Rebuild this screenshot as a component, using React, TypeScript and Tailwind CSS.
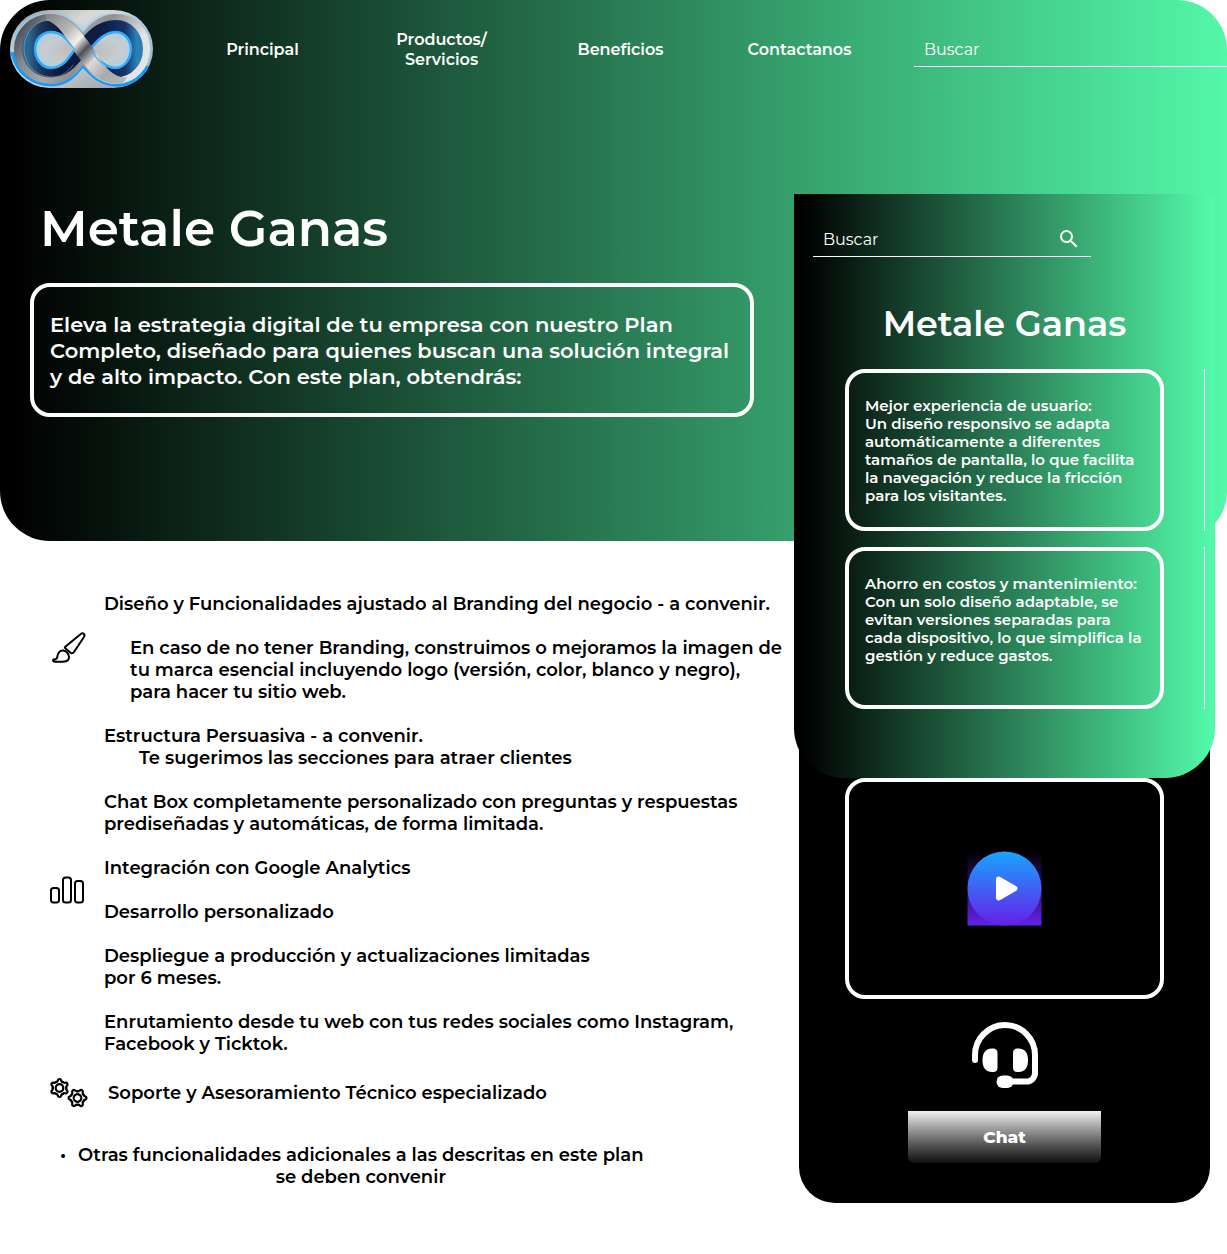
import React from "react";

const navLinks = ["Principal", "Productos/ Servicios", "Beneficios", "Contactanos"];

function Logo() {
  const holes =
    "M65 39C56 28 51 22 41 22C31 22 25 30 25 39C25 48 31 58 41 58C53 58 59 48 65 39ZM80 39C87 31 94 22 106 22C115 22 121 30 121 39C121 48 115 58 106 58C94 58 87 48 80 39Z";
  const loop =
    "M73 39C63 27 56 14 41 14C26 14 14 25 14 39C14 53 26 64 41 64C56 64 63 52 73 39C83 26 91 14 106 14C120 14 130 25 130 39C130 53 120 64 106 64C91 64 83 52 73 39Z";
  return (
    <svg viewBox="0 0 143 78" className="h-[78px] w-[143px] shrink-0 rounded-full" role="img" aria-label="Metale Ganas">
      <defs>
        <linearGradient id="plate" x1="0" y1="0" x2="1" y2="1">
          <stop offset="0" stopColor="#8d9192" />
          <stop offset="0.3" stopColor="#d9dad7" />
          <stop offset="0.6" stopColor="#c3c6c7" />
          <stop offset="1" stopColor="#8b949c" />
        </linearGradient>
        <linearGradient id="silver" x1="0" y1="0" x2="1" y2="0.3">
          <stop offset="0" stopColor="#4e5359" />
          <stop offset="0.2" stopColor="#85898e" />
          <stop offset="0.45" stopColor="#a9a7a6" />
          <stop offset="0.65" stopColor="#8e8f91" />
          <stop offset="0.85" stopColor="#bdbcbb" />
          <stop offset="1" stopColor="#e4e4e2" />
        </linearGradient>
        <linearGradient id="navy" x1="0" y1="0" x2="1" y2="0">
          <stop offset="0" stopColor="#2d6690" />
          <stop offset="0.12" stopColor="#1a3357" />
          <stop offset="0.3" stopColor="#0d1738" />
          <stop offset="0.7" stopColor="#0f1d47" />
          <stop offset="0.9" stopColor="#17346c" />
          <stop offset="1" stopColor="#2a7fb4" />
        </linearGradient>
        <linearGradient id="band" gradientUnits="userSpaceOnUse" x1="38" y1="6" x2="108" y2="72">
          <stop offset="0" stopColor="#85888c" />
          <stop offset="0.25" stopColor="#b9b8b6" />
          <stop offset="0.4" stopColor="#f4f1ec" />
          <stop offset="0.52" stopColor="#4d4f55" />
          <stop offset="0.66" stopColor="#dddad6" />
          <stop offset="0.85" stopColor="#a8a9ab" />
          <stop offset="1" stopColor="#b4b4b4" />
        </linearGradient>
        <radialGradient id="hole">
          <stop offset="0" stopColor="#b4b8bb" />
          <stop offset="0.8" stopColor="#c9ccce" />
          <stop offset="1" stopColor="#b5cedb" />
        </radialGradient>
        <filter id="glow" x="-20%" y="-20%" width="140%" height="140%">
          <feGaussianBlur stdDeviation="1.6" />
        </filter>
        <filter id="soft" x="-20%" y="-20%" width="140%" height="140%">
          <feGaussianBlur stdDeviation="0.7" />
        </filter>
      </defs>
      <rect width="143" height="78" fill="url(#plate)" />
      <path d={loop} fill="none" stroke="#8fcdf0" strokeWidth="23" filter="url(#glow)" />
      <path d="M3 42C7 63 24 74 41 74C59 74 66 62 73 54C81 64 90 74 108 74C122 74 132 67 137 56" fill="none" stroke="#0d9bff" strokeWidth="5" filter="url(#soft)" />
      <path d={loop} fill="none" stroke="url(#silver)" strokeWidth="20" />
      <path
        d="M72 39C61 27 55 16.500 41 16.500C28 16.500 18.500 27 18.500 39C18.500 51 28 61 41 61C55 61 62 51 72 39C81 27 90 16.500 106 16.500C118 16.500 126.500 27 126.500 39C126.500 51 118 61 106 61C91 61 81 51 72 39Z"
        fill="none"
        stroke="url(#navy)"
        strokeWidth="13"
      />
      <path d={holes} fill="url(#hole)" stroke="#149eff" strokeWidth="2.500" filter="url(#soft)" />
      <path d={holes} fill="none" stroke="#4fc0fb" strokeWidth="0.800" />
      <path d="M36 4C56 3 67 17 78 31C88 44 94 60 108 66Q112 68 117 67Q114 74 108 74C90 74 80 62 69 48C60 36 52 15 36 10Z" fill="url(#band)" />
      <path d="M65 40C57 30 52 22 42 22M81 40C87 49 93 58 106 58" fill="none" stroke="#35b4ff" strokeWidth="1.300" />
      <path d="M41 10C25 10 14 23 14 39C14 54 26 67 42 67C51 67 58 62 63 55" fill="none" stroke="#b4bfc6" strokeWidth="0.500" />
    </svg>
  );
}

function SearchIcon() {
  return (
    <svg viewBox="0 0 24 24" className="size-6" fill="#fff" aria-hidden="true">
      <path d="M15.5 14h-.79l-.28-.27A6.47 6.47 0 0 0 16 9.5 6.5 6.5 0 1 0 9.5 16c1.61 0 3.09-.59 4.23-1.57l.27.28v.79l5 4.99L20.49 19l-4.99-5zm-6 0C7.01 14 5 11.99 5 9.5S7.01 5 9.5 5 14 7.01 14 9.5 11.99 14 9.5 14z" />
    </svg>
  );
}

function BrushIcon() {
  return (
    <svg viewBox="0 0 38 34" className="h-[34px] w-[38px]" fill="none" stroke="#000" strokeWidth="2" strokeLinejoin="round" strokeLinecap="round" aria-hidden="true">
      <path d="M15 16L30.500 3.200C33 1.200 35.500 3 34 6L24 21C22.800 22.800 21 22.500 20 21.300L15.300 17.200Q14.500 16.500 15 16Z" />
      <path d="M13.300 19.500C10 19 7.500 22 7.300 26C7.200 28.300 5 28.500 3.500 28.600C2.500 29 3 30.800 5.500 30.800H13C18 30.800 19.800 28 18.800 24.800C18 22 16 20 13.300 19.500Z" />
    </svg>
  );
}

function ChartIcon() {
  return (
    <svg viewBox="0 0 38 30" className="h-[30px] w-[38px]" fill="none" stroke="#000" strokeWidth="2" aria-hidden="true">
      <rect x="1" y="13" width="8" height="14.500" rx="2.500" />
      <rect x="13" y="2.500" width="8" height="25" rx="2.500" />
      <rect x="25" y="6" width="8" height="21.500" rx="2.500" />
    </svg>
  );
}

function Gear() {
  return (
    <>
      {[0, 60, 120, 180, 240, 300].map((angle) => (
        <path key={angle} d="M-3.400 -5.900Q-2 -6.200 -1.700 -7.600Q-1.400 -9 0 -9Q1.400 -9 1.700 -7.600Q2 -6.200 3.400 -5.900" transform={`rotate(${angle})`} />
      ))}
      <circle r="3.800" />
    </>
  );
}

function GearsIcon() {
  return (
    <svg viewBox="0 0 38 32" className="h-8 w-[38px]" fill="none" stroke="#000" strokeWidth="2.200" strokeLinejoin="round" strokeLinecap="round" aria-hidden="true">
      <g transform="translate(9.500 11)">
        <Gear />
      </g>
      <g transform="translate(27.500 21) rotate(30)">
        <Gear />
      </g>
    </svg>
  );
}

function PlayIcon() {
  return (
    <svg viewBox="0 0 75 75" className="size-[75px]" aria-hidden="true">
      <defs>
        <linearGradient id="play" x1="0" y1="0" x2="0" y2="1">
          <stop offset="0" stopColor="#1aa4ff" />
          <stop offset="1" stopColor="#651fe8" />
        </linearGradient>
        <linearGradient id="shade" x1="0" y1="0" x2="0" y2="1">
          <stop offset="0" stopColor="#651fe8" stopOpacity="0" />
          <stop offset="1" stopColor="#651fe8" />
        </linearGradient>
      </defs>
      <rect x="0.500" width="74" height="74.500" fill="url(#shade)" />
      <circle cx="37.500" cy="37.500" r="37" fill="url(#play)" />
      <path d="M31.500 28L48 37.500L31.500 47Z" fill="#fff" stroke="#fff" strokeWidth="5" strokeLinejoin="round" />
    </svg>
  );
}

function HeadsetIcon() {
  return (
    <svg viewBox="0 0 66 66" className="size-[66px]" fill="#fff" aria-hidden="true">
      <path d="M3 38V33A30 30 0 0 1 63 33V51A8.500 8.500 0 0 1 54.500 59.500H36" fill="none" stroke="#fff" strokeWidth="6" strokeLinecap="round" />
      <path d="M20 26.500H21Q25.500 26.500 25.500 31V45.500Q25.500 50 21 50H20C13 50 10.500 45 10.500 38.300S13 26.500 20 26.500Z" />
      <path d="M46.500 26.500H45.500Q41 26.500 41 31V45.500Q41 50 45.500 50H46.500C53.500 50 56 45 56 38.300S53.500 26.500 46.500 26.500Z" />
      <rect x="24.500" y="53.500" width="17" height="12.500" rx="6.200" />
    </svg>
  );
}

function Benefit({ title, lines }: { title: string; lines: string[] }) {
  return (
    <div className="flex gap-10">
      <article className="h-[162px] w-[319px] rounded-[20px] border-4 border-white px-4 pt-6 text-[15px] leading-[18px] font-semibold">
        <h3 className="whitespace-nowrap">{title}</h3>
        <p>
          {lines.map((line) => (
            <span key={line} className="block whitespace-nowrap">{line}</span>
          ))}
        </p>
      </article>
      <div className="w-px bg-white" />
    </div>
  );
}

export default function App() {
  return (
    <div className="grid min-h-[1254px] grid-cols-[minmax(0,1fr)_433px] grid-rows-[541px_auto] overflow-hidden bg-white font-['Montserrat','Inter',sans-serif] text-black">
      <header className="col-span-2 col-start-1 row-start-1 overflow-hidden rounded-[50px] bg-[linear-gradient(90deg,#000_1%,#53f8a8_100%)] text-white">
        <nav className="flex h-[98px] items-center pl-2.5">
          <Logo />
          <div className="ml-5 flex pt-0.5">
            {navLinks.map((label) => (
              <a key={label} href="#" className="flex w-[179px] items-center justify-center px-10 text-center text-base leading-5 font-semibold">
                {label}
              </a>
            ))}
          </div>
          <input
            type="search"
            aria-label="Buscar"
            placeholder="Buscar"
            className="ml-[25px] h-9 min-w-0 flex-1 border-b border-white bg-transparent px-2.5 pt-0.5 text-base text-white outline-none placeholder:text-white"
          />
        </nav>
        <h1 className="mt-[100px] ml-10 text-[50px] leading-[62px] font-semibold">Metale Ganas</h1>
        <p className="mt-[23px] ml-[30px] w-[724px] rounded-[20px] border-4 border-white px-4 pt-[25px] pb-[23px] text-[21px] leading-[26px] font-semibold">
          <span className="block whitespace-nowrap">Eleva la estrategia digital de tu empresa con nuestro Plan</span>
          <span className="block whitespace-nowrap">Completo, diseñado para quienes buscan una solución integral</span>
          <span className="block whitespace-nowrap">y de alto impacto. Con este plan, obtendrás:</span>
        </p>
      </header>

      <main className="col-start-1 row-start-2 pt-[52px] pl-[50px] text-lg leading-[22px] font-semibold whitespace-nowrap">
        <section className="flex items-center gap-4">
          <BrushIcon />
          <div>
            <h2>Diseño y Funcionalidades ajustado al Branding del negocio - a convenir.</h2>
            <p className="mt-[22px] ml-[26px]">
              En caso de no tener Branding, construimos o mejoramos la imagen de<br />
              tu marca esencial incluyendo logo (versión, color, blanco y negro),<br />
              para hacer tu sitio web.
            </p>
          </div>
        </section>
        <section className="mt-[22px] flex items-center gap-4">
          <ChartIcon />
          <div className="flex flex-col gap-[22px]">
            <div>
              <h2>Estructura Persuasiva - a convenir.</h2>
              <p className="ml-[35px]">Te sugerimos las secciones para atraer clientes</p>
            </div>
            <p>Chat Box completamente personalizado con preguntas y respuestas<br />prediseñadas y automáticas, de forma limitada.</p>
            <p>Integración con Google Analytics</p>
            <p>Desarrollo personalizado</p>
            <p>Despliegue a producción y actualizaciones limitadas<br />por 6 meses.</p>
            <p>Enrutamiento desde tu web con tus redes sociales como Instagram,<br />Facebook y Ticktok.</p>
          </div>
        </section>
        <section className="mt-[22px] flex items-center gap-5">
          <GearsIcon />
          <h2>Soporte y Asesoramiento Técnico especializado</h2>
        </section>
        <ul className="mt-[35px] ml-2.5 text-center">
          <li className="flex gap-3">
            <span aria-hidden="true">•</span>
            <span>Otras funcionalidades adicionales a las descritas en este plan<br />se deben convenir</span>
          </li>
        </ul>
      </main>

      <aside className="z-10 col-start-2 row-span-2 row-start-1 mt-[194px] mr-3 text-white">
        <div className="relative h-[584px] rounded-b-[50px] bg-[linear-gradient(90deg,#000_2%,#53f8a8_99%)] pt-[27px]">
          <div className="ml-[19px] flex h-9 w-[278px] items-center border-b border-white pr-2.5 pl-2.5">
            <input
              type="search"
              aria-label="Buscar en el panel"
              placeholder="Buscar"
              className="min-w-0 flex-1 bg-transparent pt-0.5 text-base text-white outline-none placeholder:text-white"
            />
            <button type="button" aria-label="Buscar ahora"><SearchIcon /></button>
          </div>
          <h2 className="mt-[45px] text-center text-[35px] leading-[44px] font-semibold">Metale Ganas</h2>
          <div className="mt-[23px] ml-[51px] flex flex-col gap-4">
            <Benefit
              title="Mejor experiencia de usuario:"
              lines={["Un diseño responsivo se adapta", "automáticamente a diferentes", "tamaños de pantalla, lo que facilita", "la navegación y reduce la fricción", "para los visitantes."]}
            />
            <Benefit
              title="Ahorro en costos y mantenimiento:"
              lines={["Con un solo diseño adaptable, se", "evitan versiones separadas para", "cada dispositivo, lo que simplifica la", "gestión y reduce gastos."]}
            />
          </div>
        </div>
        <div className="mx-[5px] -mt-10 flex flex-col items-center rounded-b-[36px] bg-black pt-10 pb-10">
          <button type="button" aria-label="Reproducir video" className="flex h-[221px] w-[319px] items-center justify-center rounded-[20px] border-4 border-white">
            <PlayIcon />
          </button>
          <div className="mt-[23px]"><HeadsetIcon /></div>
          <button type="button" className="mt-[23px] h-[52px] w-[193px] rounded-b-[6px] bg-linear-to-b from-[#f2f2f2] to-[#111] pt-0.5 text-[17px] font-extrabold">
            Chat
          </button>
        </div>
      </aside>
    </div>
  );
}
